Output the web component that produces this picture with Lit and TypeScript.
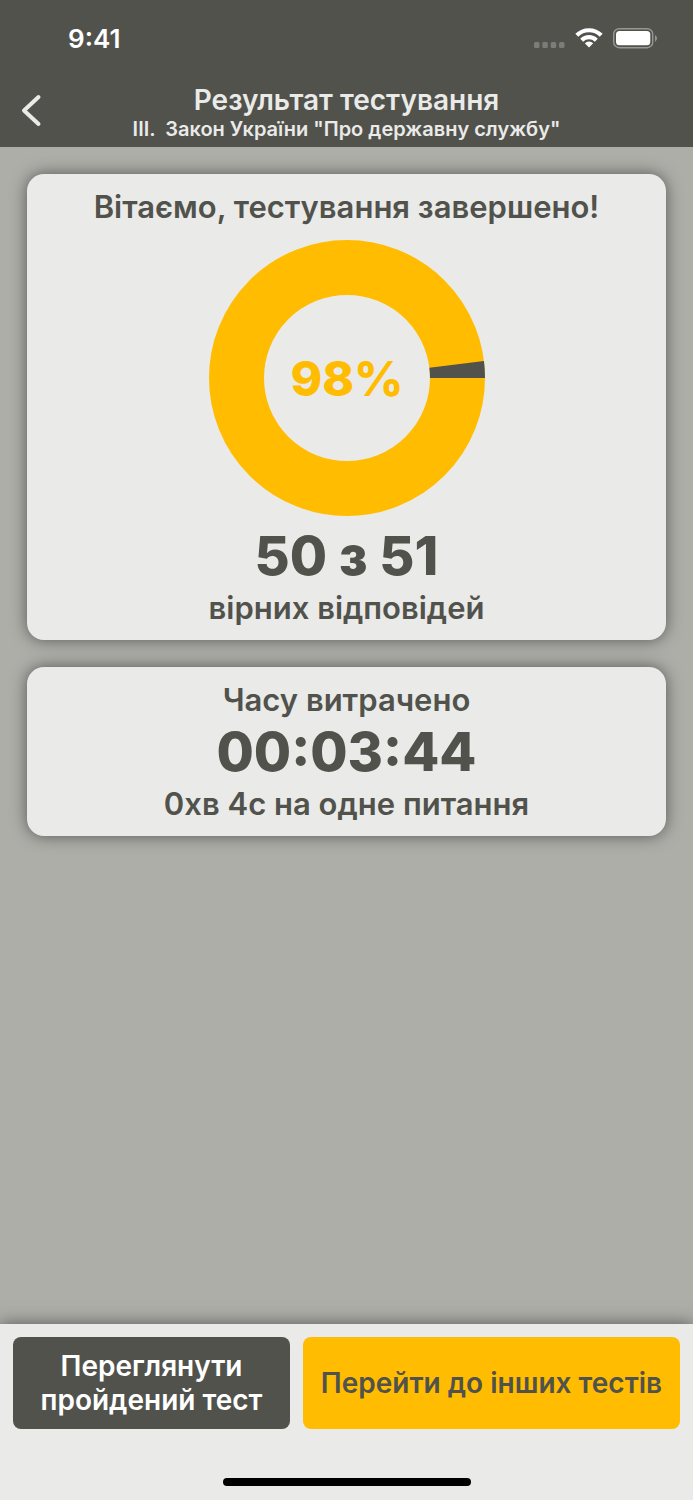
import { LitElement, html, css, svg } from "lit";
import { customElement, property } from "lit/decorators.js";

@customElement("score-ring")
class ScoreRing extends LitElement {
  @property({ type: Number }) correct = 0;
  @property({ type: Number }) total = 1;

  static styles = css`
    :host { display: block; width: 278px; }
    svg { display: block; width: 100%; }
    text {
      font: 800 48px Inter, sans-serif;
      fill: #ffbc00;
      text-anchor: middle;
    }
  `;

  render() {
    const angle = (-2 * Math.PI * (this.total - this.correct)) / this.total;
    const point = (r: number) => `${139 + r * Math.cos(angle)} ${139 + r * Math.sin(angle)}`;
    const percent = Math.round((100 * this.correct) / this.total);
    return html`<svg viewBox="0 0 278 278" role="img" aria-label="${percent}%">
      <circle cx="139" cy="139" r="110.5" fill="none" stroke="#ffbc00" stroke-width="55"></circle>
      ${svg`<path fill="#51524c" d="M222 139H277A138 138 0 0 0 ${point(138)}L${point(83)}A83 83 0 0 1 222 139Z"/>`}
      <text x="139" y="157">${percent}%</text>
    </svg>`;
  }
}

@customElement("app-root")
class AppRoot extends LitElement {
  static styles = css`
    :host {
      display: flex;
      flex-direction: column;
      min-height: 100vh;
      box-sizing: border-box;
      background: #adaea8;
      color: #51524c;
      font-family: Inter, sans-serif;
      font-weight: 600;
    }
    * { box-sizing: border-box; }
    h1, h2, p { margin: 0; font-weight: 600; }
    header { background: #51524c; color: #eaeae8; }
    .status {
      display: flex;
      justify-content: space-between;
      align-items: center;
      height: 76px;
      padding: 0 35px 0 68px;
      font-size: 26px;
      color: #fff;
    }
    .nav {
      display: grid;
      grid-template-columns: 64px 1fr 64px;
      align-items: center;
      height: 71px;
      text-align: center;
    }
    .back { border: 0; padding: 0; background: none; color: inherit; }
    svg { display: block; }
    h1 { font-size: 28px; line-height: 34px; }
    .subtitle { font-size: 20px; line-height: 24px; white-space: pre; }
    main {
      flex: 1;
      display: flex;
      flex-direction: column;
      gap: 27px;
      padding: 27px;
    }
    .card {
      display: flex;
      flex-direction: column;
      align-items: center;
      padding: 13px 12px;
      border-radius: 17px;
      background: #eaeae8;
      box-shadow: 0 0 16px rgba(0, 0, 0, 0.5);
      text-align: center;
    }
    .line { font-size: 31px; line-height: 39px; }
    .big { font-size: 54px; line-height: 65px; font-weight: 800; }
    score-ring { margin: 13px 0 6px; }
    footer {
      background: #eaeae8;
      box-shadow: 0 0 16px rgba(0, 0, 0, 0.5);
      padding: 13px 13px 14px;
    }
    .actions { display: grid; grid-template-columns: 277fr 377fr; gap: 13px; }
    .action {
      border: 0;
      border-radius: 8px;
      height: 92px;
      padding: 0 8px;
      font: 600 28px/34px Inter, sans-serif;
    }
    .dark { background: #51524c; color: #fff; }
    .yellow { background: #ffbc00; color: #51524c; }
    .home { width: 248px; height: 8px; margin: 49px auto 0; border-radius: 4px; background: #000; }
  `;

  render() {
    return html`
      <header>
        <div class="status">
          <span>9:41</span>
          <svg width="124" height="24" viewBox="0 0 124 24" aria-hidden="true">
            <g fill="#7c7d78"><rect y="16" width="5.500" height="6" rx="1.500"/><rect x="8.300" y="16" width="5.500" height="6" rx="1.500"/><rect x="16.700" y="16" width="5.500" height="6" rx="1.500"/><rect x="25" y="16" width="5.500" height="6" rx="1.500"/></g>
            <g fill="none" stroke="#fff" stroke-width="4.200"><path d="M42.800 9.300A17.300 17.300 0 0 1 67.200 9.300M47.700 14.200A10.400 10.400 0 0 1 62.300 14.200"/></g>
            <path fill="#fff" d="M50.800 17.300A6 6 0 0 1 59.200 17.300L55 21.500Z"/>
            <rect x="79.700" y="2.700" width="39" height="19" rx="5.500" fill="none" stroke="#979892" stroke-width="1.400"/>
            <rect x="82" y="5" width="34.300" height="14.300" rx="3.500" fill="#fff"/>
            <path fill="#979892" d="M121 9Q125 12 121 16Z"/>
          </svg>
        </div>
        <div class="nav">
          <button class="back" aria-label="Назад">
            <svg width="64" height="71" viewBox="0 0 64 71"><path d="M38.500 21L24 34.500L38.500 48" fill="none" stroke="currentColor" stroke-width="4" stroke-linecap="round" stroke-linejoin="round"/></svg>
          </button>
          <div>
            <h1>Результат тестування</h1>
            <p class="subtitle">III.  Закон України "Про державну службу"</p>
          </div>
        </div>
      </header>
      <main>
        <section class="card">
          <h2 class="line">Вітаємо, тестування завершено!</h2>
          <score-ring correct="50" total="51"></score-ring>
          <p class="big">50 з 51</p>
          <p class="line">вірних відповідей</p>
        </section>
        <section class="card">
          <h2 class="line">Часу витрачено</h2>
          <p class="big">00:03:44</p>
          <p class="line">0хв 4с на одне питання</p>
        </section>
      </main>
      <footer>
        <div class="actions">
          <button class="action dark">Переглянути пройдений тест</button>
          <button class="action yellow">Перейти до інших тестів</button>
        </div>
        <div class="home"></div>
      </footer>
    `;
  }
}
